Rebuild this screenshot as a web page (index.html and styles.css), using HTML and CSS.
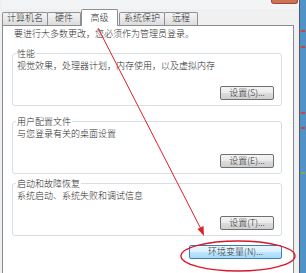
FILE: index.html
```html
<!DOCTYPE html>
<html lang="zh-CN">
<head>
    <meta charset="UTF-8">
    <meta name="viewport" content="width=device-width, initial-scale=1.0">
    <title>系统属性 - 高级</title>
    <link rel="stylesheet" href="styles.css">
</head>
<body>
    <div class="screen">
        <div class="window">
            <div class="titlebar"><span class="close-edge"></span></div>
            <div class="tabs">
                <div class="tab">计算机名</div>
                <div class="tab">硬件</div>
                <div class="tab tab-active">高级</div>
                <div class="tab">系统保护</div>
                <div class="tab">远程</div>
            </div>
            <div class="panel">
                <p class="intro">要进行大多数更改，您必须作为管理员登录。</p>

                <fieldset class="group">
                    <legend>性能</legend>
                    <p>视觉效果，处理器计划，内存使用，以及虚拟内存</p>
                    <div class="actions"><button class="btn">设置(S)...</button></div>
                </fieldset>

                <fieldset class="group group-2">
                    <legend>用户配置文件</legend>
                    <p>与您登录有关的桌面设置</p>
                    <div class="actions"><button class="btn">设置(E)...</button></div>
                </fieldset>

                <fieldset class="group group-3">
                    <legend>启动和故障恢复</legend>
                    <p>系统启动、系统失败和调试信息</p>
                    <div class="actions"><button class="btn">设置(T)...</button></div>
                </fieldset>

                <div class="env-row">
                    <button class="btn btn-hot">环境变量(N)...</button>
                </div>
            </div>
        </div>
        <div class="desk"></div>
    </div>

    <!-- red markup drawn on top of the screenshot -->
    <svg class="markup" width="306" height="273" viewBox="0 0 306 273">
        <line x1="98" y1="28" x2="201" y2="229" stroke="#e0202a" stroke-width="1"/>
        <polygon points="204,236 197.5,229 203.5,226" fill="#e0202a"/>
        <ellipse cx="238" cy="256" rx="57" ry="15" fill="none" stroke="#d8182a" stroke-width="1.4"/>
    </svg>
</body>
</html>
```

FILE: styles.css
```css
body {
    margin: 0;
    overflow: hidden;
    font-family: "Noto Sans CJK SC", "Liberation Sans", sans-serif;
    font-size: 9px;
    font-weight: 300;
    line-height: 11px;
    color: #2b2b2b;
    background: #f0f0f0;
}
.screen {
    display: flex;
    width: 306px;
    height: 273px;
    overflow: hidden;
}
.window {
    width: 300px;
    padding-left: 2px;
    box-sizing: border-box;
    background: #f0f0f0;
}
.titlebar {
    height: 9px;
    display: flex;
    justify-content: flex-end;
    background: #f3f4f6;
}
.close-edge {
    width: 25px;
    height: 3px;
    margin-right: 1px;
    background: #cf7355;
    border: 1px solid #9b4a36;
    border-top: none;
    border-radius: 0 0 3px 3px;
}
.tabs {
    display: flex;
    align-items: flex-end;
    height: 16px;
}
.tab {
    box-sizing: border-box;
    height: 13px;
    min-width: 34px;
    padding: 0 4px;
    margin-right: -1px;
    line-height: 8px;
    padding-top: 1px;
    text-align: center;
    border: 1px solid #8e9096;
    border-bottom: none;
    border-radius: 2px 2px 0 0;
    background: linear-gradient(#f5f5f5, #e9e9e9 50%, #dcdcdc);
}
.tab-active {
    position: relative;
    z-index: 1;
    height: 17px;
    min-width: 37px;
    margin: 0 0 -1px 1px;
    padding-top: 4px;
    background: #fff;
}
.tab-active + .tab {
    margin-left: 1px;
}
.panel {
    width: 292px;
    height: 260px;
    box-sizing: border-box;
    padding: 2px 11px 0 0;
    background: #fff;
    border: 1px solid #898c95;
}
.intro {
    margin: 0 0 9px 11px;
}
.group {
    margin: 0 0 0 9px;
    padding: 1px 7px 5px 4px;
    border: 1px solid #d5dfe5;
    border-radius: 3px;
}
.group legend {
    padding: 0 1px;
    margin-left: -1px;
    line-height: 11px;
}
.group p {
    margin: 0;
}
.group-2 {
    margin-top: 10px;
}
.group-3 {
    margin-top: 4px;
}
.actions {
    display: flex;
    justify-content: flex-end;
    margin-top: 15px;
}
.btn {
    box-sizing: border-box;
    width: 54px;
    height: 14px;
    padding: 0;
    font: inherit;
    line-height: 12px;
    color: #2b2b2b;
    border: 1px solid #707070;
    border-radius: 2px;
    background: linear-gradient(#f4f4f4, #ebebeb 50%, #dddddd 51%, #cfcfcf);
}
.env-row {
    display: flex;
    justify-content: flex-end;
    margin-top: 9px;
}
.btn-hot {
    width: 93px;
    border-color: #3c7fb1;
    background: linear-gradient(#eaf6fd, #d9f0fc 50%, #bee6fd 51%, #a7d9f5);
}
.desk {
    width: 6px;
    border-left: 1px solid #4d5966;
    background:
        linear-gradient(to bottom,
            transparent 30px, #d8403a 30px, #d8403a 32px, transparent 32px,
            transparent 46px, #d8403a 46px, #d8403a 48px, transparent 48px,
            transparent 112px, #d8403a 112px, #d8403a 114px, transparent 114px,
            transparent 127px, #d8403a 127px, #d8403a 129px, transparent 129px,
            transparent 172px, #8aa83e 172px, #8aa83e 174px, transparent 174px) 1px 0 / 4px 100% no-repeat,
        #4f93c8;
}
.markup {
    position: absolute;
    top: 0;
    left: 0;
    pointer-events: none;
}
```
